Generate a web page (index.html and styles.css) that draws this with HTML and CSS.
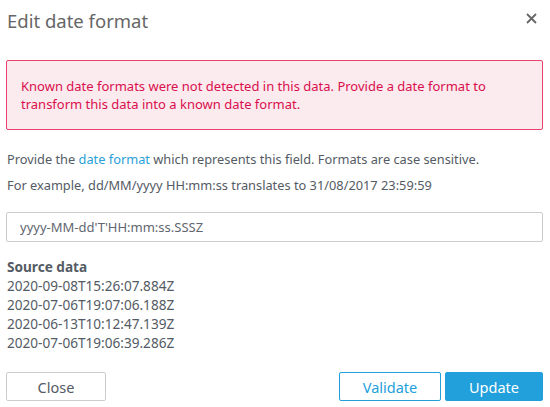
FILE: index.html
```html
<!DOCTYPE html>
<html>
<head>
<meta charset="utf-8">
<link rel="stylesheet" href="styles.css">
</head>
<body>
<div class="dialog">
  <div class="header">
    <h1 class="title">Edit date format</h1>
    <button class="close-x" aria-label="Close">
      <svg width="11" height="11" viewBox="0 0 11 11"><path d="M1 1L10 10M10 1L1 10" stroke="#666" stroke-width="1.8" fill="none"/></svg>
    </button>
  </div>
  <div class="alert">Known date formats were not detected in this data. Provide a date format to transform this data into a known date format.</div>
  <p class="hint">Provide the <a class="link" href="#">date format</a> which represents this field. Formats are case sensitive.</p>
  <p class="hint second">For example, dd/MM/yyyy HH:mm:ss translates to 31/08/2017 23:59:59</p>
  <input class="field" type="text" placeholder="yyyy-MM-dd'T'HH:mm:ss.SSSZ">
  <div class="source">
    <div class="source-title">Source data</div>
    <div class="row">2020-09-08T15:26:07.884Z</div>
    <div class="row">2020-07-06T19:07:06.188Z</div>
    <div class="row">2020-06-13T10:12:47.139Z</div>
    <div class="row">2020-07-06T19:06:39.286Z</div>
  </div>
  <div class="footer">
    <button class="btn btn-default">Close</button>
    <div class="right">
      <button class="btn btn-outline">Validate</button>
      <button class="btn btn-primary">Update</button>
    </div>
  </div>
</div>
</body>
</html>
```
FILE: styles.css
```css
* { box-sizing: border-box; }
html, body { margin: 0; padding: 0; background: #fff; }
body { font-family: "Noto Sans", "Open Sans", sans-serif; color: #545b64; font-size: 13px; }
.dialog { padding: 0 7px 0 6px; width: 550px; }
.header { display: flex; justify-content: space-between; align-items: center; height: 40px; }
.title { margin: 1px 0 0 1px; font-size: 18.5px; font-weight: 400; color: #666; line-height: 40px; }
.close-x { border: 0; background: none; padding: 0; margin-right: 6px; margin-top: -4px; display: flex; }
.alert { margin-top: 20px; height: 70px; border: 1px solid #e8436e; background: #fbeaee; color: #d90f4d; border-radius: 2px; padding: 16px 14px; line-height: 18px; font-size: 13px; }
.hint { margin: 20px 0 0 1px; line-height: 18px; font-size: 12.8px; }
.hint.second { margin-top: 8px; }
.link { color: #2a9fd8; text-decoration: none; }
.field { display: block; width: 100%; height: 30px; margin-top: 18px; border: 1px solid #ccc; border-radius: 2px; padding: 0 13px; font: inherit; color: #545b64; }
.field::placeholder { color: #5f6670; }
.source { margin-top: 15px; margin-left: 1px; font-size: 13.6px; }
.source-title { font-weight: 700; line-height: 19px; }
.row { line-height: 19px; }
.footer { display: flex; justify-content: space-between; margin-top: 20px; }
.right { display: flex; gap: 4px; }
.btn { font: inherit; font-size: 14.5px; height: 29px; width: 100px; border-radius: 2px; cursor: pointer; }
.btn-default { background: #fff; border: 1px solid #ccc; color: #545b64; }
.btn-outline { background: #fff; border: 1px solid #21a0db; color: #21a0db; width: 102px; }
.btn-primary { background: #21a0db; border: 1px solid #21a0db; color: #fff; width: 98px; }
```
